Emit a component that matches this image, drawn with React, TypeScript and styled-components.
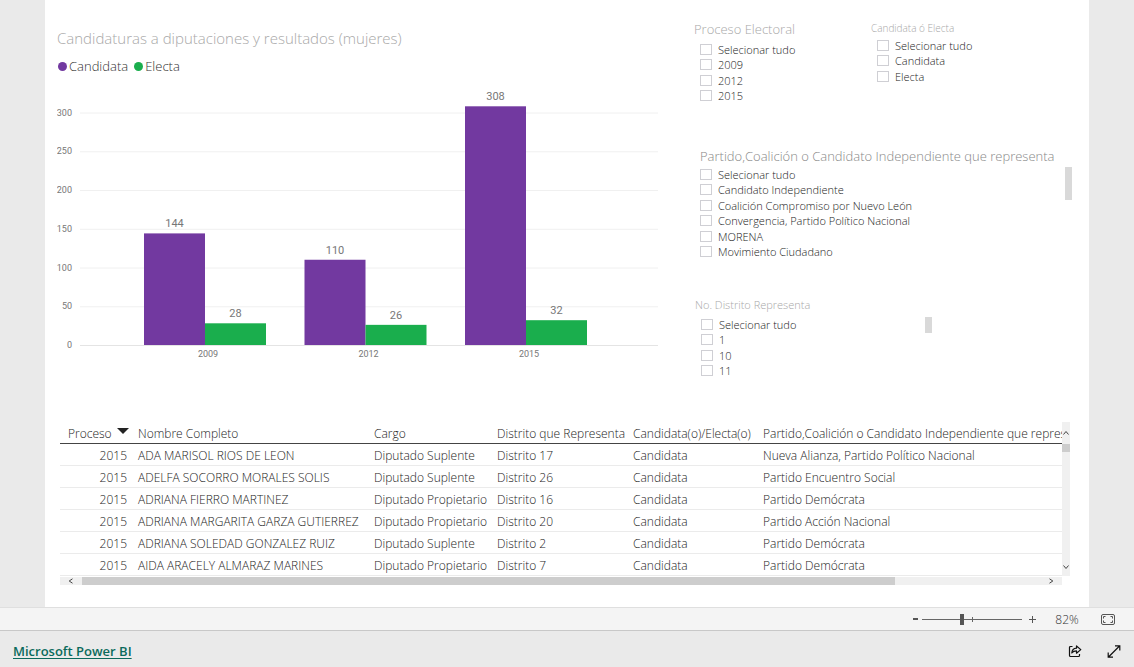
import React from "react";
import styled, { createGlobalStyle } from "styled-components";

const GlobalStyle = createGlobalStyle`
  *, *::before, *::after { box-sizing: border-box; }
  body {
    margin: 0;
    background: #eaeaea;
    color: #1c1c1c;
    font-family: "Open Sans", "Noto Sans", sans-serif;
    font-size: 12px;
    font-weight: 320;
  }
`;

const Page = styled.div`
  display: flex;
  flex-direction: column;
  min-height: 100vh;
`;

const Canvas = styled.main`
  flex: 1;
  margin: 0 45px;
  padding: 18px 17px 21px 12px;
  background: #fff;
`;

const Visuals = styled.div`
  display: grid;
  grid-template-columns: minmax(0, 603fr) minmax(0, 378fr);
  column-gap: 34px;
  min-height: 404px;
  align-items: start;
`;

/* ---------- chart ---------- */

const ChartPanel = styled.section`
  padding-top: 10px;
`;

const ChartTitle = styled.h1`
  margin: 0;
  font-size: 15px;
  font-weight: 300;
  line-height: 20px;
  color: #a8a8a8;
  white-space: nowrap;
`;

const Legend = styled.ul`
  display: flex;
  gap: 6px;
  margin: 8px 0 4px;
  padding: 0 0 0 1px;
  list-style: none;
  font-size: 13px;
  line-height: 20px;
  color: #333;
`;

const LegendItem = styled.li<{ $color: string }>`
  display: flex;
  align-items: center;
  gap: 2px;

  &::before {
    content: "";
    width: 9px;
    height: 9px;
    border-radius: 50%;
    background: ${(p) => p.$color};
  }
`;

const ChartSvg = styled.svg`
  display: block;
  width: 100%;
  height: auto;
  font-family: Roboto, sans-serif;
  font-weight: 400;
  fill: #777;
`;

const PURPLE = "#7239a0";
const GREEN = "#1aae4d";
const BASE = 265;
const toY = (v: number) => BASE - v * 0.775;

const results = [
  { year: 2009, candidata: 144, electa: 28 },
  { year: 2012, candidata: 110, electa: 26 },
  { year: 2015, candidata: 308, electa: 32 },
];

function BarChart() {
  return (
    <ChartSvg viewBox="0 0 603 285" role="img" aria-label="Candidaturas a diputaciones y resultados">
      {[0, 50, 100, 150, 200, 250, 300].map((t) => (
        <g key={t}>
          <line x1="23" x2="601" y1={toY(t) + 0.5} y2={toY(t) + 0.5} stroke={t ? "#f0f0f0" : "#e4e4e4"} />
          <text x="15" y={toY(t) + 3} fontSize="9" textAnchor="end">{t}</text>
        </g>
      ))}
      {results.map((r, i) => {
        const x = 87 + i * 160.5;
        return (
          <g key={r.year}>
            <rect x={x} y={toY(r.candidata)} width="61" height={BASE - toY(r.candidata)} fill={PURPLE} />
            <rect x={x + 61} y={toY(r.electa)} width="61" height={BASE - toY(r.electa)} fill={GREEN} />
            <g fontSize="11" textAnchor="middle">
              <text x={x + 30.5} y={toY(r.candidata) - 6}>{r.candidata}</text>
              <text x={x + 91.5} y={toY(r.electa) - 6}>{r.electa}</text>
            </g>
            <text x={x + 64} y={BASE + 12} fontSize="9" textAnchor="middle">{r.year}</text>
          </g>
        );
      })}
    </ChartSvg>
  );
}

/* ---------- slicers ---------- */

const Slicers = styled.div`
  display: flex;
  flex-direction: column;
`;

const SlicerRow = styled.div`
  display: grid;
  grid-template-columns: 177px 1fr;
  align-items: start;
  min-height: 128px;
`;

const SlicerBox = styled.fieldset<{ $top?: number; $left?: number; $width?: string }>`
  min-width: 0;
  width: ${(p) => p.$width ?? "auto"};
  margin: ${(p) => p.$top ?? 0}px 0 0 ${(p) => p.$left ?? 0}px;
  padding: 0;
  border: 0;
`;

const SlicerTitle = styled.legend<{ $size: number; $dark?: boolean }>`
  padding: 0;
  font-size: ${(p) => p.$size}px;
  font-weight: 300;
  line-height: 20px;
  color: ${(p) => (p.$dark ? "#888" : "#a8a8a8")};
  white-space: nowrap;
`;

const SlicerBody = styled.div<{ $indent: number; $gap: number }>`
  display: flex;
  justify-content: space-between;
  align-items: flex-start;
  padding: ${(p) => p.$gap}px 0 0 ${(p) => p.$indent}px;
`;

const Options = styled.ul`
  margin: 0;
  padding: 0;
  list-style: none;
`;

const Option = styled.li`
  height: 15px;
  &:nth-child(even) { height: 16px; }
`;

const OptionLabel = styled.label`
  display: flex;
  align-items: center;
  gap: 6px;
  height: 15px;
  font-size: 11px;
  line-height: 15px;
  color: #222;
  white-space: nowrap;
`;

const Check = styled.input`
  appearance: none;
  flex: none;
  width: 12px;
  height: 11px;
  margin: 0;
  border: 1px solid #cfcfd4;
  background: #fff;
  &:checked { background: #666; }
`;

const Thumb = styled.div<{ $height: number }>`
  width: 7px;
  height: ${(p) => p.$height}px;
  background: #d9d9d9;
`;

type SlicerProps = {
  title: string;
  size: number;
  options: string[];
  top?: number;
  left?: number;
  indent?: number;
  gap?: number;
  width?: string;
  dark?: boolean;
  thumb?: number;
};

function Slicer({ title, size, options, top, left, indent = 6, gap = 2, width, dark, thumb }: SlicerProps) {
  return (
    <SlicerBox $top={top} $left={left} $width={width}>
      <SlicerTitle $size={size} $dark={dark}>{title}</SlicerTitle>
      <SlicerBody $indent={indent} $gap={gap}>
        <Options>
          {options.map((o) => (
            <Option key={o}>
              <OptionLabel>
                <Check type="checkbox" />
                {o}
              </OptionLabel>
            </Option>
          ))}
        </Options>
        {thumb && <Thumb $height={thumb} />}
      </SlicerBody>
    </SlicerBox>
  );
}

/* ---------- table ---------- */

const TableFrame = styled.div`
  display: grid;
  grid-template-columns: minmax(0, 1fr) 8px;
  margin: 0 2px 0 3px;
`;

const TableClip = styled.div`
  overflow: hidden;
`;

const Table = styled.table`
  width: 1060px;
  table-layout: fixed;
  border-collapse: separate;
  border-spacing: 0;
  font-size: 12px;
  line-height: 18px;
`;

const Col = styled.col<{ $width: number }>`
  width: ${(p) => p.$width}px;
`;

const Th = styled.th<{ $sorted?: boolean }>`
  height: 22px;
  padding: ${(p) => (p.$sorted ? "3px 3px 0 8px" : "3px 0 0 8px")};
  border-bottom: 1px solid #444;
  font-weight: inherit;
  text-align: left;
  white-space: nowrap;
`;

const SortButton = styled.button`
  display: flex;
  align-items: center;
  gap: 5px;
  padding: 0;
  border: 0;
  background: none;
  color: inherit;
  font: inherit;

  &::after {
    content: "";
    margin-bottom: 6px;
    border: 6px solid transparent;
    border-top-color: #222;
    border-bottom: 0;
  }
`;

const Td = styled.td<{ $right?: boolean }>`
  height: 22px;
  padding: ${(p) => (p.$right ? "2px 3px 0 0" : "2px 0 0 8px")};
  border-bottom: 1px solid #ebebeb;
  text-align: ${(p) => (p.$right ? "right" : "left")};
  white-space: nowrap;
`;

const VBar = styled.div`
  display: flex;
  flex-direction: column;
  justify-content: space-between;
  align-items: center;
  background: #f0f0f0;
  color: #444;
  padding: 8px 0 6px;
`;

const VThumb = styled.div`
  width: 8px;
  height: 8px;
  margin: 8px 0 auto;
  background: #cdcdcd;
`;

const HBar = styled.div`
  display: flex;
  align-items: center;
  height: 8px;
  margin-top: 1px;
  padding: 0 8px;
  background: #f0f0f0;
  color: #444;
`;

const HTrack = styled.div`
  flex: 1;
  margin: 0 9px 0 8px;
`;

const HThumb = styled.div`
  width: 85%;
  height: 8px;
  background: #cdcdcd;
`;

const Arrow = styled.svg`
  flex: none;
  display: block;
  width: 6px;
  height: 6px;
  fill: none;
  stroke: currentColor;
`;

const columns = [70, 236, 123, 136, 130, 365];
const headers = ["Nombre Completo", "Cargo", "Distrito que Representa", "Candidata(o)/Electa(o)", "Partido,Coalición o Candidato Independiente que representa"];
const rows = [
  ["2015", "ADA MARISOL RIOS DE LEON", "Diputado Suplente", "Distrito 17", "Candidata", "Nueva Alianza, Partido Político Nacional"],
  ["2015", "ADELFA SOCORRO MORALES SOLIS", "Diputado Suplente", "Distrito 26", "Candidata", "Partido Encuentro Social"],
  ["2015", "ADRIANA FIERRO MARTINEZ", "Diputado Propietario", "Distrito 16", "Candidata", "Partido Demócrata"],
  ["2015", "ADRIANA MARGARITA GARZA GUTIERREZ", "Diputado Propietario", "Distrito 20", "Candidata", "Partido Acción Nacional"],
  ["2015", "ADRIANA SOLEDAD GONZALEZ RUIZ", "Diputado Suplente", "Distrito 2", "Candidata", "Partido Demócrata"],
  ["2015", "AIDA ARACELY ALMARAZ MARINES", "Diputado Propietario", "Distrito 7", "Candidata", "Partido Demócrata"],
];

function ResultsTable() {
  return (
    <TableFrame>
      <TableClip>
        <Table>
          <colgroup>
            {columns.map((w, i) => <Col key={i} $width={w} />)}
          </colgroup>
          <thead>
            <tr>
              <Th $sorted aria-sort="descending"><SortButton type="button">Proceso</SortButton></Th>
              {headers.map((h) => <Th key={h}>{h}</Th>)}
            </tr>
          </thead>
          <tbody>
            {rows.map((r) => (
              <tr key={r[1]}>
                {r.map((c, i) => <Td key={i} $right={i === 0}>{c}</Td>)}
              </tr>
            ))}
          </tbody>
        </Table>
      </TableClip>
      <VBar>
        <Arrow viewBox="0 0 6 6"><path d="M.5 4.5 3 1.5l2.500 3" /></Arrow>
        <VThumb />
        <Arrow viewBox="0 0 6 6"><path d="M.5 1.500 3 4.500l2.500-3" /></Arrow>
      </VBar>
      <HBar>
        <Arrow viewBox="0 0 6 6"><path d="M4.500.8 1.200 3l3.300 2.200" /></Arrow>
        <HTrack><HThumb /></HTrack>
        <Arrow viewBox="0 0 6 6"><path d="M1.500.8 4.800 3 1.500 5.200" /></Arrow>
      </HBar>
    </TableFrame>
  );
}

/* ---------- bottom bars ---------- */

const StatusBar = styled.div`
  display: flex;
  justify-content: flex-end;
  align-items: center;
  height: 24px;
  padding-right: 19px;
  border-top: 1px solid #dfdfdf;
  border-bottom: 1px solid #c8c8c8;
  background: #f4f4f4;
  color: #333;
`;

const IconButton = styled.button`
  display: flex;
  align-items: center;
  justify-content: center;
  padding: 0;
  border: 0;
  background: none;
  color: inherit;
`;

const ZoomButton = styled(IconButton)`
  width: 20px;
  height: 20px;
  color: #555;
`;

const ZoomSlider = styled.input`
  appearance: none;
  width: 100px;
  height: 11px;
  margin: 0 0 0 -3px;
  background:
    linear-gradient(#666, #666) 50px 50% / 1px 5px no-repeat,
    linear-gradient(#666, #666) 0 50% / 100% 1px no-repeat;

  &::-webkit-slider-thumb {
    appearance: none;
    width: 4px;
    height: 11px;
    background: #555;
  }
`;

const ZoomValue = styled.output`
  width: 24px;
  margin: 0 22px 0 13px;
  font-size: 12px;
  text-align: center;
`;

const Footer = styled.footer`
  display: flex;
  justify-content: space-between;
  align-items: center;
  height: 36px;
  padding: 4px 13px 0;
  background: #eaeaea;
  color: #111;
`;

const BrandLink = styled.a`
  color: #0b6a5c;
  font-size: 13px;
  font-weight: 600;
  line-height: 20px;
  text-underline-offset: 2px;
`;

const Actions = styled.div`
  display: flex;
  gap: 25px;
`;

export default function App() {
  return (
    <Page>
      <GlobalStyle />
      <Canvas>
        <Visuals>
          <ChartPanel>
            <ChartTitle>Candidaturas a diputaciones y resultados (mujeres)</ChartTitle>
            <Legend>
              <LegendItem $color={PURPLE}>Candidata</LegendItem>
              <LegendItem $color={GREEN}>Electa</LegendItem>
            </Legend>
            <BarChart />
          </ChartPanel>
          <Slicers>
            <SlicerRow>
              <Slicer title="Proceso Electoral" size={13} top={1} gap={3} options={["Selecionar tudo", "2009", "2012", "2015"]} />
              <Slicer title="Candidata ó Electa" size={10} gap={0} options={["Selecionar tudo", "Candidata", "Electa"]} />
            </SlicerRow>
            <Slicer
              title="Partido,Coalición o Candidato Independiente que representa"
              size={13}
              left={6}
              indent={0}
              gap={1}
              dark
              thumb={33}
              options={["Selecionar tudo", "Candidato Independiente", "Coalición Compromiso por Nuevo León", "Convergencia, Partido Político Nacional", "MORENA", "Movimiento Ciudadano"]}
            />
            <Slicer title="No. Distrito Representa" size={11} top={35} left={1} width="237px" thumb={16} options={["Selecionar tudo", "1", "10", "11"]} />
          </Slicers>
        </Visuals>
        <ResultsTable />
      </Canvas>
      <StatusBar>
        <ZoomButton type="button" aria-label="Reducir">
          <svg width="5" height="2"><path d="M0 1h5" stroke="currentColor" strokeWidth="2" /></svg>
        </ZoomButton>
        <ZoomSlider type="range" min="0" max="100" defaultValue="40" aria-label="Zoom" />
        <ZoomButton type="button" aria-label="Ampliar">
          <svg width="7" height="7"><path d="M0 3.500h7M3.500 0v7" stroke="currentColor" /></svg>
        </ZoomButton>
        <ZoomValue>82%</ZoomValue>
        <IconButton type="button" aria-label="Ajustar a la página">
          <svg width="14" height="11" viewBox="0 0 14 11" fill="none" stroke="#555">
            <rect x=".5" y=".5" width="13" height="10" rx="1.500" />
            <path d="M4.500 2.500h-2v2M2.500 6.500v2h2M9.500 2.500h2v2M11.500 6.500v2h-2" />
          </svg>
        </IconButton>
      </StatusBar>
      <Footer>
        <BrandLink href="#">Microsoft Power BI</BrandLink>
        <Actions>
          <IconButton type="button" aria-label="Compartir">
            <svg width="14" height="13" viewBox="0 0 14 13" fill="none" stroke="currentColor" strokeWidth="1.200">
              <path d="M4.500 1.500H2.500a1 1 0 0 0-1 1v8a1 1 0 0 0 1 1h8a1 1 0 0 0 1-1V9" />
              <path d="M8.500 1v2.200C5.500 3.400 4 5 3.800 8 5 6.400 6.500 5.900 8.500 5.900V8.200L12.800 4.600z" strokeLinejoin="round" />
            </svg>
          </IconButton>
          <IconButton type="button" aria-label="Pantalla completa">
            <svg width="14" height="13" viewBox="0 0 14 13" fill="none" stroke="currentColor" strokeWidth="1.200">
              <path d="M1.500 12 12.500 1M8 .8h4.800v4.700M1.200 7.500v4.700H6" />
            </svg>
          </IconButton>
        </Actions>
      </Footer>
    </Page>
  );
}
